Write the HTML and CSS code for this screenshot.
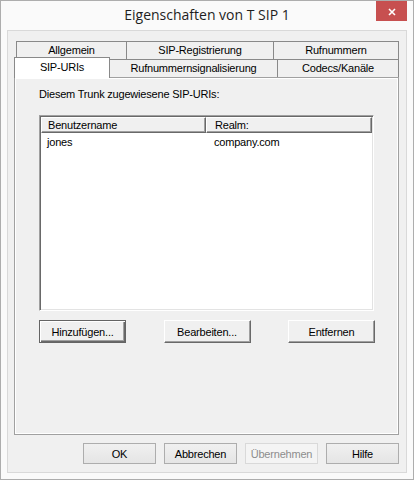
FILE: index.html
```html
<!DOCTYPE html>
<html lang="de">
<head>
    <meta charset="UTF-8">
    <meta name="viewport" content="width=device-width, initial-scale=1.0">
    <title>Eigenschaften von T SIP 1</title>
    <link rel="stylesheet" href="styles.css">
</head>
<body>
    <div class="window">
        <div class="titlebar">
            <span class="title">Eigenschaften von T SIP 1</span>
            <button class="close-btn" aria-label="Schließen">
                <svg width="8" height="8" viewBox="0 0 8 8">
                    <path d="M1 1 L7 7 M7 1 L1 7" stroke="#ffffff" stroke-width="1.6" fill="none"/>
                </svg>
            </button>
        </div>

        <div class="client">
            <div class="tabs">
                <div class="tab-row back">
                    <div class="tab tab-allgemein">Allgemein</div>
                    <div class="tab tab-registrierung">SIP-Registrierung</div>
                    <div class="tab tab-rufnummern">Rufnummern</div>
                </div>
                <div class="tab-row front">
                    <div class="tab tab-uris selected">SIP-URIs</div>
                    <div class="tab tab-signalisierung">Rufnummernsignalisierung</div>
                    <div class="tab tab-codecs">Codecs/Kanäle</div>
                </div>

                <div class="tab-page">
                    <p class="caption">Diesem Trunk zugewiesene SIP-URIs:</p>

                    <div class="listview">
                        <div class="lv-header">
                            <div class="lv-col col-name">Benutzername</div>
                            <div class="lv-col col-realm">Realm:</div>
                        </div>
                        <div class="lv-row">
                            <div class="lv-cell col-name">jones</div>
                            <div class="lv-cell col-realm">company.com</div>
                        </div>
                    </div>

                    <div class="page-buttons">
                        <button class="btn-classic default">Hinzufügen...</button>
                        <button class="btn-classic">Bearbeiten...</button>
                        <button class="btn-classic">Entfernen</button>
                    </div>
                </div>
            </div>

            <div class="dialog-buttons">
                <button class="btn">OK</button>
                <button class="btn">Abbrechen</button>
                <button class="btn" disabled>Übernehmen</button>
                <button class="btn">Hilfe</button>
            </div>
        </div>
    </div>
</body>
</html>
```

FILE: styles.css
```css
* {
    margin: 0;
    padding: 0;
    box-sizing: border-box;
}

body {
    font-family: "Liberation Sans", Arial, sans-serif;
    font-size: 11px;
    letter-spacing: -0.2px;
    color: #000000;
    background: #ffffff;
}

.window {
    position: relative;
    width: 414px;
    height: 480px;
    border: 1px solid #adadad;
    background: #fafafa;
    display: flex;
    flex-direction: column;
}

/* title bar */
.titlebar {
    height: 29px;
    padding-bottom: 2px;
    display: flex;
    align-items: center;
    justify-content: center;
}

.title {
    font-family: "Open Sans", "Noto Sans", sans-serif;
    font-size: 14px;
    letter-spacing: 0;
    color: #1e1e1e;
}

.close-btn {
    position: absolute;
    top: 0;
    right: 6px;
    width: 31px;
    height: 20px;
    border: none;
    background: #c75050;
    display: flex;
    align-items: center;
    justify-content: center;
    padding-top: 1px;
}

/* client area */
.client {
    flex: 1;
    margin: 0 6px 6px;
    border: 1px solid #d9d9d9;
    background: #f0f0f0;
    padding: 10px 7px 0 6px;
}

/* tab control */
.tab-row {
    display: flex;
    height: 18px;
}

.tab-row.back {
    margin-left: 2px;
}

.tab {
    height: 18px;
    line-height: 17px;
    text-align: center;
    white-space: nowrap;
    background: #f0f0f0;
    border: 1px solid #898989;
    border-bottom: none;
}

.tab + .tab {
    margin-left: -1px;
}

.tab-allgemein { width: 111px; }
.tab-registrierung { width: 148px; }
.tab-rufnummern { width: 126px; }
.tab-uris { width: 96px; }
.tab-signalisierung { width: 169px; }
.tab-codecs { width: 122px; }

.tab.selected {
    position: relative;
    z-index: 1;
    height: 21px;
    margin-top: -2px;
    line-height: 18px;
    background: #ffffff;
}

.tab-page {
    height: 358px;
    border: 1px solid #a0a0a0;
    box-shadow: inset 1px 1px #ffffff, inset -1px -1px #ffffff;
    padding: 10px 24px 0;
}

.caption {
    line-height: 13px;
    margin-bottom: 14px;
}

/* list view */
.listview {
    width: 335px;
    height: 196px;
    background: #ffffff;
    border: 1px solid;
    border-color: #a0a0a0 #ffffff #ffffff #a0a0a0;
    box-shadow: inset 1px 1px #696969, inset -1px -1px #e3e3e3;
    padding: 1px;
}

.lv-header {
    display: flex;
    height: 16px;
}

.lv-col {
    background: #f0f0f0;
    line-height: 14px;
    padding: 0 6px;
    border: 1px solid;
    border-color: #ffffff #696969 #696969 #ffffff;
    box-shadow: inset -1px -1px #a0a0a0;
}

.lv-row {
    display: flex;
    line-height: 17px;
    padding-top: 1px;
}

.lv-cell {
    padding: 0 6px;
}

.col-name {
    width: 165px;
}

.col-realm {
    flex: 1;
    padding-left: 8px;
}

.page-buttons {
    width: 336px;
    margin-top: 9px;
    display: flex;
    justify-content: space-between;
}

.btn-classic {
    width: 87px;
    height: 23px;
    font-family: inherit;
    font-size: 11px;
    letter-spacing: inherit;
    color: #000000;
    background: #f0f0f0;
    border: 1px solid;
    border-color: #ffffff #696969 #696969 #ffffff;
    box-shadow: inset -1px -1px #a0a0a0, inset 1px 1px #f0f0f0;
}

.btn-classic.default {
    border-color: #646464;
    box-shadow: inset 1px 1px #ffffff, inset -1px -1px #696969, inset -2px -2px #a0a0a0;
}

/* dialog buttons */
.dialog-buttons {
    margin-top: 8px;
    display: flex;
    justify-content: flex-end;
    gap: 8px;
}

.btn {
    width: 73px;
    height: 21px;
    font-family: inherit;
    font-size: 11px;
    letter-spacing: inherit;
    color: #000000;
    border: 1px solid #adadad;
    background: linear-gradient(#f0f0f0, #e5e5e5);
}

.btn:disabled {
    color: #8d8d8d;
    border-color: #d9d9d9;
    background: #f4f4f4;
}
```
